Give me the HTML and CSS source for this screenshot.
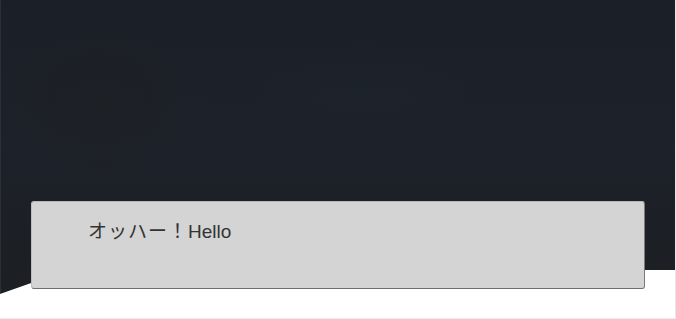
FILE: index.html
```html
<!DOCTYPE html>
<html lang="ja">
<head>
<meta charset="utf-8">
<link rel="stylesheet" href="styles.css">
</head>
<body>
<div class="page">
  <div class="backdrop"></div>
  <div class="card">
    <p class="greeting"><span class="kana">オッハー！</span>Hello</p>
  </div>
</div>
</body>
</html>
```
FILE: styles.css
```css
html, body {
  margin: 0;
  padding: 0;
  background: #ffffff;
}
.page {
  position: relative;
  width: 676px;
  height: 319px;
  overflow: hidden;
  box-sizing: border-box;
  border-right: 1px solid #e6e6e6;
  border-bottom: 1px solid #ececec;
  padding-top: 201px;
  padding-left: 31px;
}
.backdrop {
  position: absolute;
  left: 0;
  top: 0;
  width: 676px;
  height: 295px;
  background:
    radial-gradient(ellipse 160px 110px at 100px 100px, rgba(30, 33, 32, 0.35), rgba(30, 33, 32, 0) 75%),
    radial-gradient(ellipse 320px 120px at 360px 90px, rgba(28, 36, 46, 0.4), rgba(28, 36, 46, 0) 70%),
    linear-gradient(180deg, #1b1f27 0%, #1d2129 50%, #1c1f23 100%);
  clip-path: polygon(0 0, 676px 0, 676px 270px, 68px 270px, 0 294px);
  border-left: 1px solid #2c2f34;
  box-sizing: border-box;
}
.card {
  position: relative;
  width: 614px;
  height: 88px;
  box-sizing: border-box;
  background: #d4d4d4;
  border-radius: 3px;
  border-top: 1px solid #b8b8b8;
  border-left: 1px solid #bdbdbd;
  border-right: 1px solid #7a7a7a;
  border-bottom: 1px solid #6f6f6f;
  padding: 19px 0 0 56px;
}
.greeting {
  margin: 0;
  font-family: "Liberation Sans", "Noto Sans CJK JP", sans-serif;
  font-size: 19px;
  line-height: 22px;
  color: #333333;
}
.kana {
  letter-spacing: 1px;
}
```
